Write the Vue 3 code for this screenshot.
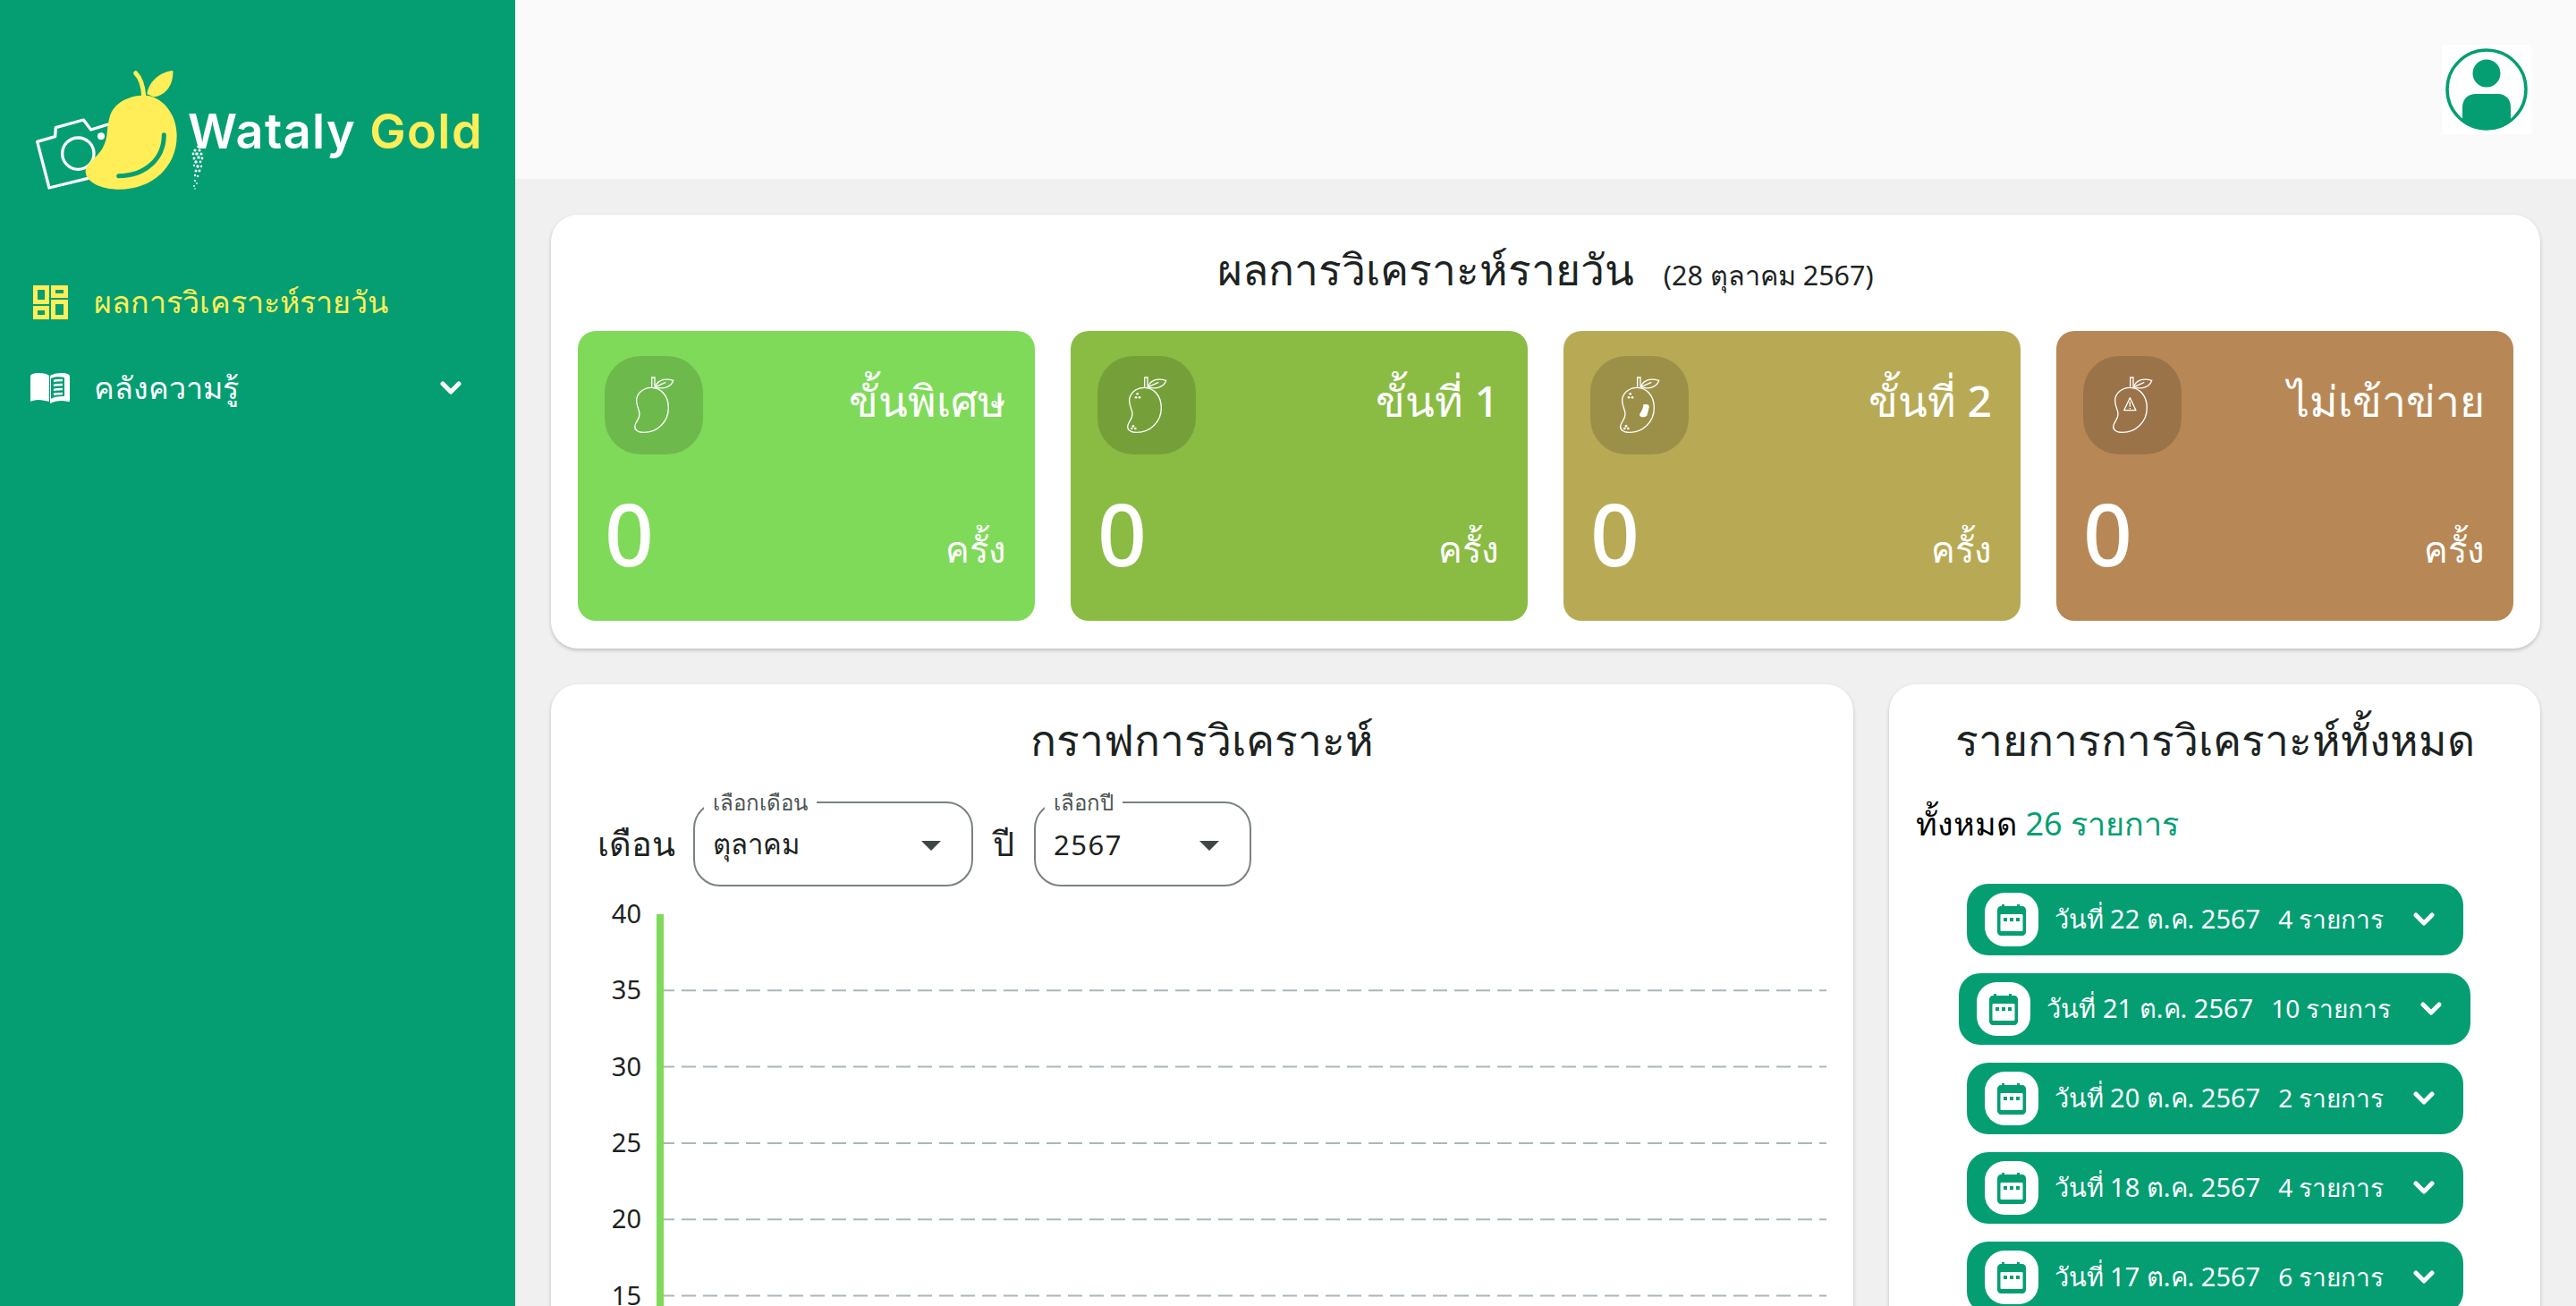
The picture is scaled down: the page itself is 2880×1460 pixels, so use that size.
<template>
  <div class="layout">
    <aside class="sidebar">
      <div class="brand">
        <svg class="brand-mark" viewBox="0 0 510 510">
          <g fill="none" stroke="#fff" stroke-width="10" stroke-linejoin="round" stroke-linecap="round">
            <path d="M205 418 75 450 35 295 95 278 97 248 190 222 215 255 270 238" />
            <circle cx="172" cy="335" r="53" />
          </g>
          <circle cx="249" cy="277" r="12" fill="#fff" />
          <path d="M385 140C440 135 503 190 503 275 503 380 420 455 310 455 250 455 197 430 197 395 197 370 235 350 255 315 275 280 265 250 280 205 295 165 340 142 385 140Z" fill="#ffee58" />
          <path d="M392 142C390 105 380 80 365 65" fill="none" stroke="#ffee58" stroke-width="15" stroke-linecap="round" />
          <path d="M403 135C410 90 450 60 490 57 492 100 470 140 425 145Z" fill="#ffee58" />
          <path d="M460 272C460 350 400 410 308 410" fill="none" stroke="#049e72" stroke-width="15" stroke-linecap="round" />
        </svg>
        <div class="brand-name">
          <span>Wataly</span> <b>Gold</b>
          <svg class="brand-sprig" viewBox="0 0 16 50">
            <circle v-for="(d, i) in sprig" :key="i" :cx="d[0]" :cy="d[1]" :r="d[2]" fill="#fff" />
          </svg>
        </div>
      </div>

      <nav class="menu">
        <a class="menu-item active">
          <svg class="menu-icon" viewBox="0 0 46 38" fill="none" stroke="#ffee58" stroke-width="5">
            <rect x="6.5" y="2.5" width="13" height="16" />
            <rect x="26.5" y="2.5" width="14" height="9" />
            <rect x="6.5" y="25.5" width="13" height="10" />
            <rect x="26.5" y="18.5" width="14" height="17" />
          </svg>
          <span>ผลการวิเคราะห์รายวัน</span>
        </a>
        <a class="menu-item">
          <svg class="menu-icon" viewBox="0 0 46 36">
            <path d="M1 5C1 2 5 1 10 1 16 1 20 2 22 4V33C18 32 14 31 10 31 6 31 3 32 1 33Z" fill="#fff" />
            <path d="M23 4C26 2 31 1 36 1 41 1 45 2 45 5V32C45 33 44 33 43 33 36 31 29 32 23 35Z" fill="#fff" />
            <path d="M24 7C28 5 34 5 39 6V27C34 27 28 27 24 30Z" fill="#049e72" />
            <path d="M27 10C30 9 33 9 37 9M27 15C30 14 33 14 37 14M27 20C30 19 33 19 37 19M27 25C30 24 33 24 37 24" fill="none" stroke="#fff" stroke-width="2.5" />
          </svg>
          <span>คลังความรู้</span>
          <svg class="menu-caret" viewBox="0 0 24 16" fill="none" stroke="#fff" stroke-width="5" stroke-linecap="round" stroke-linejoin="round">
            <path d="M3 3 12 12 21 3" />
          </svg>
        </a>
      </nav>
    </aside>

    <div class="page">
      <header class="topbar">
        <div class="avatar">
          <svg viewBox="0 0 100 100" width="100" height="100">
            <defs>
              <clipPath id="avatar-clip"><circle cx="50" cy="50" r="45" /></clipPath>
            </defs>
            <circle cx="50" cy="50" r="44" fill="none" stroke="#049e72" stroke-width="3.5" />
            <circle cx="50" cy="32" r="15.5" fill="#049e72" />
            <path d="M23 95V70C23 60 30 55 38 55H62C70 55 77 60 77 70V95Z" fill="#049e72" clip-path="url(#avatar-clip)" />
          </svg>
        </div>
      </header>

      <main class="content">
        <section class="panel summary">
          <h2 class="panel-title">
            ผลการวิเคราะห์รายวัน
            <small>(28 ตุลาคม 2567)</small>
          </h2>
          <div class="stats">
            <div v-for="s in stats" :key="s.name" class="stat" :class="s.cls">
              <div class="stat-top">
                <div class="stat-icon">
                  <svg viewBox="0 0 330 330" fill="none" stroke="#fff" stroke-width="4">
                    <path d="M157 106C190 106 214 135 214 174 214 222 175 256 132 256 108 256 98 245 102 232 106 218 117 212 117 194 117 180 107 172 107 149 107 125 130 106 157 106Z" />
                    <path d="M158 104V72H168V104" />
                    <path d="M170 104C175 85 195 72 230 82 225 100 200 115 170 104ZM170 104 205 88" />
                    <g v-if="s.spots" fill="#fff" stroke="none">
                      <circle cx="134" cy="127" r="4" /><circle cx="129" cy="139" r="4" /><circle cx="141" cy="139" r="4" />
                      <circle cx="120" cy="235" r="4" /><circle cx="127" cy="243" r="4" /><circle cx="115" cy="243" r="4" />
                    </g>
                    <path v-if="s.blemish" d="M178 163C188 160 199 162 197 172 195 182 192 192 190 200 180 207 168 207 165 198 166 190 176 185 178 163Z" fill="#fff" stroke="none" />
                    <g v-if="s.warning">
                      <path d="M157 140 177 182H137Z" stroke-width="4" stroke-linejoin="round" />
                      <path d="M157 153V170M157 174V178" stroke-width="4" />
                    </g>
                  </svg>
                </div>
                <div class="stat-name">{{ s.name }}</div>
              </div>
              <div class="stat-bottom">
                <div class="stat-value">{{ s.value }}</div>
                <div class="stat-unit">ครั้ง</div>
              </div>
            </div>
          </div>
        </section>

        <div class="lower">
          <section class="panel chart-panel">
            <h2 class="panel-title">กราฟการวิเคราะห์</h2>
            <div class="filters">
              <span class="filter-label">เดือน</span>
              <div class="select month">
                <label>เลือกเดือน</label>
                <span>ตุลาคม</span>
                <i class="arrow"></i>
              </div>
              <span class="filter-label">ปี</span>
              <div class="select year">
                <label>เลือกปี</label>
                <span class="year-value">2567</span>
                <i class="arrow"></i>
              </div>
            </div>
            <svg class="chart" viewBox="0 -10 1396 510" width="1396" height="510">
              <line v-for="t in ticks.slice(1)" :key="t.label" x1="92" x2="1396" :y1="t.y" :y2="t.y" stroke="#a9b8ba" stroke-width="2" stroke-dasharray="16 8" />
              <rect x="88" y="19" width="8" height="481" fill="#80da5a" />
              <text v-for="t in ticks" :key="t.label" class="tick" x="71" :y="t.y + 10" text-anchor="end">{{ t.label }}</text>
            </svg>
          </section>

          <section class="panel list-panel">
            <h2 class="panel-title">รายการการวิเคราะห์ทั้งหมด</h2>
            <p class="total">ทั้งหมด <em>26 รายการ</em></p>
            <ul class="days">
              <li v-for="d in days" :key="d.date" class="day">
                <span class="day-icon">
                  <svg viewBox="0 0 32 36" width="32" height="36">
                    <path d="M4 3H5V1H8V3H22V1H25V3H28C30 3 32 5 32 7V32C32 34 30 36 28 36H4C2 36 0 34 0 32V7C0 5 2 3 4 3Z" fill="#049e72" />
                    <rect x="3.5" y="12" width="25" height="19" rx="1" fill="#fff" />
                    <rect x="7" y="16" width="4" height="4" fill="#049e72" />
                    <rect x="14" y="16" width="4" height="4" fill="#049e72" />
                    <rect x="21" y="16" width="4" height="4" fill="#049e72" />
                  </svg>
                </span>
                <span class="day-date">{{ d.date }}</span>
                <span class="day-count">{{ d.count }} รายการ</span>
                <svg class="day-caret" viewBox="0 0 24 16" fill="none" stroke="#fff" stroke-width="5" stroke-linecap="round" stroke-linejoin="round">
                  <path d="M3 3 12 12 21 3" />
                </svg>
              </li>
            </ul>
          </section>
        </div>
      </main>
    </div>
  </div>
</template>

<script setup>
const stats = [
  { name: "ขั้นพิเศษ", value: 0, cls: "special" },
  { name: "ขั้นที่ 1", value: 0, cls: "first", spots: true },
  { name: "ขั้นที่ 2", value: 0, cls: "second", spots: true, blemish: true },
  { name: "ไม่เข้าข่าย", value: 0, cls: "none", warning: true },
];

// y positions follow the chart scale, 85.3px per 5 units
const ticks = [40, 35, 30, 25, 20, 15].map((v, i) => ({
  label: v,
  y: 19 + i * 85.3,
}));

const days = [
  { date: "วันที่ 22 ต.ค. 2567", count: 4 },
  { date: "วันที่ 21 ต.ค. 2567", count: 10 },
  { date: "วันที่ 20 ต.ค. 2567", count: 2 },
  { date: "วันที่ 18 ต.ค. 2567", count: 4 },
  { date: "วันที่ 17 ต.ค. 2567", count: 6 },
];

const sprig = [
  [8, 1, 1], [5, 5, 1.6], [10, 5, 1.6], [3, 9, 1.4], [7, 9, 1.8], [12, 9, 1.6],
  [4, 14, 1.5], [9, 13, 1.7], [13, 14, 1.4], [6, 18, 1.7], [11, 18, 1.4], [4, 22, 1.2],
  [8, 23, 1.7], [12, 23, 1.2], [6, 28, 1.5], [10, 28, 1.4], [5, 33, 1.2], [8, 34, 1.3],
  [5, 39, 1.1], [7, 42, 0.9], [4, 45, 0.9], [5, 48, 0.8],
];
</script>

<style>
body {
  background: #f0f0f0;
}
</style>

<style scoped>
.layout {
  display: flex;
  height: 100vh;
  overflow: hidden;
  font-family: "Noto Sans", "Inter", "DejaVu Sans", sans-serif;
  color: #1c2321;
}

/* Sidebar */
.sidebar {
  flex: 0 0 576px;
  background: #049e72;
  color: #fff;
}

.brand {
  display: flex;
  align-items: flex-start;
  padding: 60px 0 0 30px;
  height: 290px;
  box-sizing: border-box;
}

.brand-mark {
  flex: none;
  width: 170px;
  height: 170px;
}

.brand-name {
  position: relative;
  margin: 55px 0 0 10px;
  font-family: "Inter", sans-serif;
  font-size: 54px;
  line-height: 64px;
  font-weight: 600;
  letter-spacing: 1.4px;
  white-space: nowrap;
}

.brand-name b {
  color: #ffee58;
  font-weight: 600;
}

.brand-sprig {
  position: absolute;
  left: 3px;
  top: 48px;
  width: 16px;
  height: 50px;
}

.menu-item {
  display: flex;
  align-items: center;
  height: 96px;
  padding: 0 0 0 33px;
  font-size: 34px;
  color: #fff;
}

.menu-item.active {
  color: #ffee58;
}

.menu-icon {
  flex: none;
  width: 46px;
  height: 38px;
  margin-right: 26px;
}

.menu-caret {
  width: 24px;
  height: 16px;
  margin-left: auto;
  margin-right: 60px;
}

/* Page */
.page {
  flex: 1;
  min-width: 0;
}

.topbar {
  display: flex;
  justify-content: flex-end;
  align-items: center;
  height: 200px;
  padding-right: 50px;
  background: #fafafa;
}

.avatar {
  width: 100px;
  height: 100px;
  background: #fff;
}

.content {
  padding: 40px;
}

.panel {
  background: #fff;
  border-radius: 30px;
  box-shadow: 0 2px 4px rgba(0, 0, 0, 0.2);
}

.panel-title {
  margin: 0;
  text-align: center;
  font-size: 48px;
  line-height: 64px;
  font-weight: 500;
}

.panel-title small {
  margin-left: 20px;
  font-size: 30.5px;
  font-weight: 400;
}

/* Daily summary */
.summary {
  height: 485px;
  padding: 29px 30px 0;
  box-sizing: border-box;
}

.stats {
  display: grid;
  grid-template-columns: repeat(4, 1fr);
  gap: 40px;
  margin-top: 31px;
}

.stat {
  height: 324px;
  padding: 28px 32px 0 30px;
  box-sizing: border-box;
  border-radius: 20px;
  color: #fff;
}

.stat.special { background: #80da5a; }
.stat.first { background: #8abc44; }
.stat.second { background: #b8aa55; }
.stat.none { background: #b78856; }

.stat-top,
.stat-bottom {
  display: flex;
  justify-content: space-between;
}

.stat-icon {
  width: 110px;
  height: 110px;
  border-radius: 40px;
  background: rgba(0, 0, 0, 0.15);
}

.stat-name {
  margin-top: 14px;
  font-size: 48px;
  line-height: 72px;
  font-weight: 500;
}

.stat-bottom {
  align-items: flex-end;
  margin-top: 28px;
}

.stat-value {
  font-size: 96px;
  line-height: 120px;
  font-weight: 500;
}

.stat-unit {
  font-size: 40px;
  line-height: 60px;
  font-weight: 500;
  margin-bottom: 12px;
}

/* Lower row */
.lower {
  display: grid;
  grid-template-columns: 2fr 1fr;
  gap: 40px;
  margin-top: 40px;
}

.chart-panel {
  padding: 30px 30px 0;
  height: 800px;
  box-sizing: border-box;
}

.filters {
  display: flex;
  align-items: center;
  margin-top: 37px;
  font-size: 38px;
}

.filter-label {
  margin-left: 22px;
}

.select {
  position: relative;
  display: flex;
  align-items: center;
  height: 95px;
  padding-left: 20px;
  box-sizing: border-box;
  border: 2px solid #7a8280;
  border-radius: 30px;
  font-size: 31px;
}

.select.month {
  width: 313px;
  margin-left: 20px;
}

.select.year {
  width: 243px;
  margin-left: 22px;
}

.year-value {
  letter-spacing: 1.5px;
}

.select label {
  position: absolute;
  left: 10px;
  top: -15px;
  padding: 0 10px;
  background: #fff;
  font-size: 24px;
  line-height: 28px;
  color: #4d5553;
}

.arrow {
  position: absolute;
  top: 42px;
  right: 34px;
  border-left: 11px solid transparent;
  border-right: 11px solid transparent;
  border-top: 11px solid #3f4745;
}

.chart {
  display: block;
  margin-top: 2px;
}

.tick {
  font-size: 29px;
  fill: #1c2321;
  font-family: "Noto Sans", sans-serif;
}

/* Day list */
.list-panel {
  height: 800px;
  padding: 30px 30px 0;
  box-sizing: border-box;
}

.total {
  margin: 37px 0 0;
  font-size: 36px;
  line-height: 50px;
  color: #000;
}

.total em {
  font-style: normal;
  color: #049e72;
}

.days {
  display: flex;
  flex-direction: column;
  align-items: center;
  gap: 20px;
  margin: 42px 0 0;
  padding: 0;
  list-style: none;
}

.day {
  display: flex;
  align-items: center;
  height: 80px;
  padding: 0 32px 0 20px;
  box-sizing: border-box;
  border-radius: 24px;
  background: #049e72;
  color: #fff;
  font-size: 29px;
  white-space: nowrap;
}

.day-icon {
  display: flex;
  align-items: center;
  justify-content: center;
  width: 60px;
  height: 60px;
  margin-right: 18px;
  border-radius: 22px;
  background: #fff;
}

.day-count {
  margin-left: 20px;
  font-size: 28px;
}

.day-caret {
  width: 24px;
  height: 16px;
  margin-left: 32px;
}
</style>
